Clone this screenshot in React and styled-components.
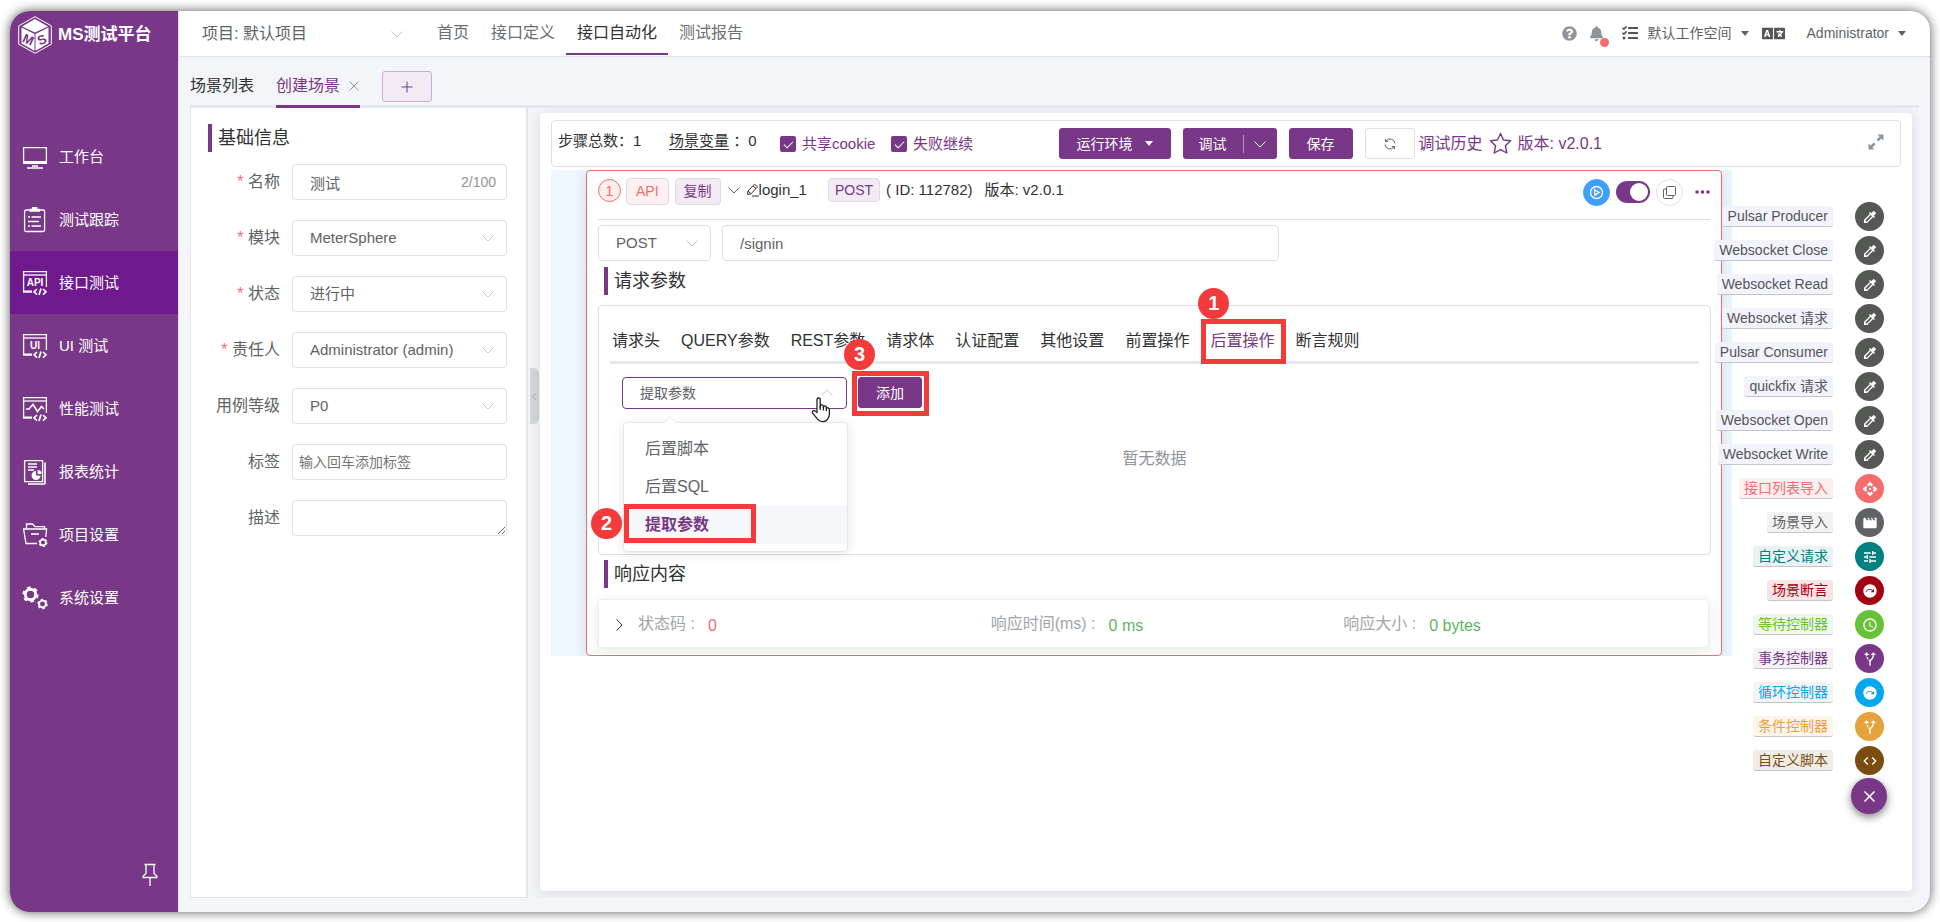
import React from "react";
import styled, { createGlobalStyle, css } from "styled-components";
import { FaBell, FaLanguage, FaQuestionCircle, FaTasks } from "react-icons/fa";
import {
  MdAccessTime,
  MdAltRoute,
  MdApi,
  MdClose,
  MdCode,
  MdColorize,
  MdMovie,
  MdNextPlan,
  MdTune,
} from "react-icons/md";

const purple = "#783887";
const purpleDark = "#6f198d";
const red = "#f56c6c";
const border = "#dcdfe6";
const text = "#606266";

const GlobalStyle = createGlobalStyle`
  * {
    box-sizing: border-box;
  }

  body {
    margin: 0;
    background: #fff;
    color: #303133;
    font-family: "Liberation Sans", "Noto Sans CJK SC", sans-serif;
    font-size: 15px;
    line-height: 20px;
  }

  button, input, select, textarea {
    margin: 0;
    font-family: inherit;
    font-size: inherit;
    line-height: inherit;
    color: inherit;
  }

  button {
    padding: 0;
    border: 0;
    background: none;
    cursor: pointer;
  }

  a {
    color: inherit;
    text-decoration: none;
  }

  h2, ul, dl, dd {
    margin: 0;
    padding: 0;
  }

  svg {
    display: block;
    flex-shrink: 0;
  }
`;

/* ---------- frame and sidebar ---------- */

const Frame = styled.div`
  display: flex;
  min-height: calc(100vh - 21px);
  margin: 11px 10px 10px;
  border-radius: 20px;
  overflow: hidden;
  background: #f4f5f8;
  box-shadow: 0 0 11px rgba(0, 0, 0, 0.65);
`;

const Sidebar = styled.aside`
  display: flex;
  flex-direction: column;
  width: 168px;
  flex-shrink: 0;
  background: ${purple};
  color: #fff;
`;

const Brand = styled.a`
  display: flex;
  align-items: center;
  gap: 6px;
  height: 48px;
  padding-left: 8px;
  font-size: 17px;
  font-weight: bold;
`;

const Menu = styled.nav`
  display: flex;
  flex-direction: column;
  margin-top: 66px;
`;

const MenuItem = styled.a`
  display: flex;
  align-items: center;
  gap: 11px;
  height: 63px;
  padding-left: 12px;
  background: ${props => (props.$active ? purpleDark : "transparent")};
`;

const PinButton = styled.button`
  align-self: flex-end;
  margin: auto 20px 25px 0;
`;

/* ---------- top bar ---------- */

const Main = styled.div`
  display: flex;
  flex-direction: column;
  flex: 1;
  min-width: 0;
  border-left: 1px solid #dfe0e4;
`;

const TopBar = styled.header`
  display: flex;
  height: 46px;
  padding: 0 24px 0 22px;
  background: #fff;
  border-bottom: 1px solid #e2e2e2;
  color: ${text};
  font-size: 14px;
`;

const TopNav = styled.nav`
  display: flex;
  margin-left: 10px;
`;

const TopLink = styled.a`
  height: 44px;
  padding: 12px 11px 0;
  font-size: 16px;
  color: ${props => (props.$active ? "#303133" : "#6b6e73")};
  border-bottom: 2px solid ${props => (props.$active ? purple : "transparent")};
`;

const TopTools = styled.div`
  display: flex;
  align-items: center;
  height: 44px;
  margin-left: auto;
`;

const IconButton = styled.button`
  position: relative;
  margin-right: ${props => props.$space || 0}px;
  color: ${props => props.$color || "#909399"};
`;

const AlertDot = styled.span`
  position: absolute;
  right: -5px;
  bottom: -6px;
  width: 9px;
  height: 9px;
  border-radius: 50%;
  background: ${red};
`;

const TopDropdown = styled.button`
  display: flex;
  align-items: center;
  gap: 9px;
  margin-right: ${props => props.$space || 0}px;
`;

const Caret = styled.span`
  border: 4px solid transparent;
  border-top: 5px solid currentColor;
  border-bottom: 0;
`;

/* ---------- tabs ---------- */

const Content = styled.main`
  display: flex;
  flex-direction: column;
  flex: 1;
  padding: 0 11px 14px;
`;

const PageTabs = styled.div`
  display: flex;
  height: 51px;
  border-bottom: 3px solid #e4e7ed;
  font-size: 16px;
`;

const PageTab = styled.div`
  display: flex;
  align-items: center;
  gap: 8px;
  height: 51px;
  margin-right: 22px;
  padding-top: 9px;
  color: ${props => (props.$active ? purple : "#303133")};
  border-bottom: 3px solid ${props => (props.$active ? purple : "transparent")};
`;

const AddTab = styled.button`
  display: flex;
  align-items: center;
  justify-content: center;
  width: 50px;
  height: 31px;
  margin-top: 14px;
  border: 1px solid #c9afcf;
  border-radius: 3px;
  background: #f2ebf3;
  color: ${purple};
`;

const Workspace = styled.div`
  display: flex;
  flex: 1;
`;

/* ---------- basic info form ---------- */

const InfoPanel = styled.section`
  width: 338px;
  flex-shrink: 0;
  padding: 16px 19px 16px 17px;
  background: #fff;
  border: 1px solid #e4e5e8;
  border-width: 0 2px 1px 1px;
`;

const SectionTitle = styled.h2`
  height: 28px;
  padding-left: 6px;
  border-left: 4px solid ${purple};
  font-size: 18px;
  font-weight: normal;
  line-height: 28px;
`;

const InfoForm = styled.form`
  display: grid;
  grid-template-columns: 72px minmax(0, 1fr);
  gap: 20px 12px;
  align-items: center;
  margin-top: 12px;
  color: ${text};
`;

const Label = styled.label`
  font-size: 16px;
  text-align: right;
  white-space: nowrap;

  ${props =>
    props.$required &&
    css`
      &::before {
        content: "* ";
        color: ${red};
      }
    `}
`;

const Field = styled.div`
  position: relative;
  display: flex;
  align-items: center;
  align-self: center;
  width: ${props => props.$width || "100%"};
  height: 36px;
  border: 1px solid ${props => (props.$plain ? "transparent" : border)};
  border-radius: 4px;
  background: #fff;
  color: ${text};
`;

const Control = styled.input`
  flex: 1;
  min-width: 0;
  height: 100%;
  padding: 0 ${props => props.$padding || "17px"};
  border: 0;
  background: none;
  font-size: ${props => props.$size || "15px"};
  appearance: none;
  outline: none;

  &::placeholder {
    color: #757575;
    opacity: 1;
  }
`;

const Counter = styled.span`
  padding-right: 10px;
  color: #909399;
  font-size: 14px;
`;

const FieldArrow = styled.span`
  position: absolute;
  right: 11px;
  color: #c0c4cc;
  pointer-events: none;
`;

const TextArea = styled.textarea`
  display: block;
  width: 100%;
  height: 36px;
  min-height: 36px;
  padding: 5px 15px;
  border: 1px solid ${border};
  border-radius: 4px;
  resize: vertical;
`;

const DetailArea = styled.section`
  position: relative;
  display: flex;
  flex: 1;
  min-width: 0;
  padding: 5px 7px 7px 12px;
  overflow: hidden;
`;

const CollapseHandle = styled.button`
  position: absolute;
  top: 260px;
  left: 2px;
  display: flex;
  align-items: center;
  justify-content: center;
  width: 9px;
  height: 56px;
  border-radius: 0 6px 6px 0;
  background: #d4d7dd;
  color: #8f959e;
`;

/* ---------- scenario panel ---------- */

const Panel = styled.div`
  position: relative;
  flex: 1;
  min-width: 0;
  padding: 7px 11px;
  border-radius: 4px;
  background: #fff;
  box-shadow: 0 2px 14px rgba(0, 0, 0, 0.12);
`;

const Toolbar = styled.div`
  display: grid;
  grid-template-columns: repeat(24, minmax(0, 1fr));
  align-items: center;
  height: 47px;
  padding: 0 10px 0 6px;
  border: 1px solid ${border};
  border-radius: 4px;
  white-space: nowrap;
`;

const Stat = styled.div`
  grid-column: span 2;
  padding-bottom: 6px;

  a {
    border-bottom: 1px solid #303133;
  }
`;

const CheckLabel = styled.label`
  grid-column: span 2;
  display: flex;
  align-items: center;
  gap: 6px;
  color: ${purple};
`;

const CheckBox = styled.input`
  display: flex;
  justify-content: center;
  width: 16px;
  height: 16px;
  flex-shrink: 0;
  border-radius: 2px;
  background: ${purple};
  appearance: none;

  &::after {
    content: "";
    width: 4px;
    height: 8px;
    margin-top: 3px;
    border: solid #fff;
    border-width: 0 1px 1px 0;
    transform: rotate(45deg);
  }
`;

const Actions = styled.div`
  grid-column: 10 / -1;
  display: flex;
  align-items: center;
  gap: 12px;
  padding: 0 6px 0 1px;
  color: ${purple};
  font-size: 16px;
`;

const Button = styled.button`
  display: flex;
  align-items: center;
  gap: 12px;
  height: 31px;
  padding: 0 17px;
  border: 1px solid ${props => (props.$plain ? border : purple)};
  border-radius: 3px;
  background: ${props => (props.$plain ? "#fff" : purple)};
  color: ${props => (props.$plain ? text : "#fff")};
  font-size: 14px;
`;

const SplitButton = styled.div`
  display: flex;
  align-items: center;
  height: 31px;
  border-radius: 3px;
  background: ${purple};
  color: #fff;
  font-size: 14px;

  button {
    height: 18px;
    padding: 0 16px;
    line-height: 18px;
  }

  button + button {
    padding: 0 10px 0 9px;
    border-left: 1px solid #b793bf;
  }
`;

const VersionGroup = styled.div`
  display: flex;
  align-items: center;
  gap: 6px;
  margin-left: -8px;
`;

const ExpandButton = styled.button`
  margin-left: auto;
  padding-bottom: 4px;
  color: #8b94a3;
`;

const StepArea = styled.div`
  margin: 3px 169px 0 0;
  padding: 0 10px 0 35px;
  overflow: hidden;
  background: #eef6ff;
`;

const StepCard = styled.article`
  padding: 0 10px 7px 11px;
  border: 1px solid ${red};
  border-radius: 4px;
  background: #fff;
  box-shadow: 0 2px 14px rgba(0, 0, 0, 0.12);
`;

const StepHeader = styled.header`
  display: flex;
  align-items: flex-start;
  height: 49px;
  margin-right: 1px;
  padding-top: 7px;
  border-bottom: 1px solid ${border};
  line-height: 24px;
  white-space: nowrap;
`;

const StepIndex = styled.span`
  width: 23px;
  height: 23px;
  margin: 1px 5px 0 0;
  border: 1px solid ${red};
  border-radius: 50%;
  background: #fdeeee;
  color: ${red};
  line-height: 21px;
  text-align: center;
`;

const Tag = styled.span`
  height: ${props => (props.$small ? 24 : 27)}px;
  margin-right: 6px;
  padding: 0 ${props => props.$pad || 8}px;
  border: 1px solid #e4d7e7;
  border-radius: 4px;
  background: ${props => (props.$danger ? "#fef0f0" : "#f2ebf3")};
  color: ${props => (props.$danger ? red : purple)};
  font-size: 14px;
  line-height: ${props => (props.$small ? 22 : 24)}px;
`;

const StepName = styled.span`
  display: flex;
  align-items: center;
  margin: 0 21px 0 5px;
`;

const StepVersion = styled.span`
  margin-left: 12px;
`;

const StepToggle = styled.button`
  display: flex;
  align-items: center;
  height: 24px;
  color: ${text};
`;

const StepTools = styled.div`
  display: flex;
  align-items: center;
  gap: 6px;
  height: 28px;
  margin-left: auto;
`;

const RoundButton = styled.button`
  display: flex;
  align-items: center;
  justify-content: center;
  width: 27px;
  height: 27px;
  border: 1px solid ${props => (props.$primary ? "#409eff" : border)};
  border-radius: 50%;
  background: ${props => (props.$primary ? "#409eff" : "#fff")};
  color: ${props => (props.$primary ? "#fff" : text)};
`;

const Switch = styled.input`
  width: 34px;
  height: 22px;
  padding: 2px;
  border-radius: 11px;
  background: ${purple};
  appearance: none;

  &::after {
    content: "";
    display: block;
    width: 18px;
    height: 18px;
    margin-left: auto;
    border-radius: 50%;
    background: #fff;
  }
`;

const MoreButton = styled.button`
  margin-left: 6px;
  color: ${purple};
`;

const RequestRow = styled.div`
  display: flex;
  gap: 11px;
  margin: 5px 0 6px;
`;

const StepTitle = styled(SectionTitle)`
  margin-left: 6px;
`;

const ParamBox = styled.div`
  height: 250px;
  margin: 10px 0 5px;
  padding: 13px 11px 0;
  border: 1px solid ${border};
  border-radius: 4px;
`;

const ParamTabs = styled.div`
  display: flex;
  gap: 21px;
  height: 45px;
  padding-left: 2px;
  border-bottom: 3px solid #e4e7ed;
  font-size: 16px;
`;

const ParamTab = styled.button`
  position: relative;
  height: 42px;
  padding-top: 2px;
  color: ${props => (props.$active ? purple : "#303133")};
  white-space: nowrap;
`;

const ParamBody = styled.div`
  display: flex;
  align-items: flex-start;
  gap: 11px;
  padding: 13px 0 0 12px;
`;

const ProcessorSelect = styled.div`
  position: relative;
  width: 225px;
`;

const ProcessorButton = styled.button`
  display: flex;
  align-items: center;
  justify-content: space-between;
  width: 100%;
  height: 32px;
  padding: 0 12px 0 17px;
  border: 1px solid ${purple};
  border-radius: 4px;
  color: ${text};
  font-size: 14px;

  svg {
    color: #c0c4cc;
  }
`;

const Options = styled.ul`
  position: absolute;
  top: 45px;
  left: 1px;
  width: 100%;
  padding: 7px 0;
  border: 1px solid #e4e7ed;
  border-radius: 4px;
  background: #fff;
  box-shadow: 0 2px 12px rgba(0, 0, 0, 0.1);
  list-style: none;
  z-index: 2;

  &::before {
    content: "";
    position: absolute;
    top: -5px;
    left: 41px;
    width: 9px;
    height: 9px;
    border: solid #ebeef5;
    border-width: 1px 0 0 1px;
    background: #fff;
    transform: rotate(45deg);
  }
`;

const Option = styled.li`
  position: relative;
  height: 38px;
  padding: 0 21px;
  background: ${props => (props.$selected ? "#f5f7fa" : "transparent")};
  color: ${props => (props.$selected ? purple : text)};
  font-size: 16px;
  font-weight: ${props => (props.$selected ? "bold" : "normal")};
  line-height: 38px;
`;

const AddWrap = styled.div`
  position: relative;
`;

const Pointer = styled.svg`
  position: absolute;
  top: 20px;
  left: 189px;
  z-index: 3;
`;

/* numbered red frame around the control that a step talks about */
const Mark = styled.span`
  position: absolute;
  inset: ${props => props.$inset};
  border: 5px solid #f33b3b;
  pointer-events: none;
  z-index: 3;
`;

const MarkNumber = styled.span`
  position: absolute;
  top: ${props => props.$top}px;
  left: ${props => props.$left}px;
  width: 31px;
  height: 31px;
  border-radius: 50%;
  background: #f33b3b;
  color: #fff;
  font-size: 20px;
  font-weight: bold;
  line-height: 31px;
  text-align: center;
`;

const Empty = styled.p`
  margin: 0;
  padding-top: 40px;
  color: #909399;
  font-size: 16px;
  text-align: center;
`;

const Response = styled.div`
  display: flex;
  align-items: center;
  height: 49px;
  margin: 11px 2px 0 0;
  padding: 2px 12px 0 13px;
  border: 1px solid #ebeef5;
  border-radius: 4px;
  box-shadow: 0 2px 12px rgba(0, 0, 0, 0.1);
  font-size: 16px;
`;

const Metrics = styled.dl`
  display: grid;
  grid-template-columns: repeat(3, 1fr);
  flex: 1;
  margin-left: 12px;

  div {
    display: flex;
    gap: 13px;
  }

  dt {
    color: #a3a5a8;
  }
`;

const MetricValue = styled.dd`
  padding-top: 2px;
  color: ${props => props.$color};
`;

/* ---------- floating step menu ---------- */

const FabMenu = styled.div`
  position: absolute;
  right: 25px;
  bottom: 77px;
  display: flex;
  flex-direction: column;
  align-items: flex-end;
  gap: 5px;
  z-index: 4;
`;

const FabItem = styled.button`
  display: flex;
  align-items: center;
  gap: 22px;
  margin-right: 3px;
`;

const FabLabel = styled.span`
  padding: 0 5px;
  border-bottom: 1px solid #c4c4c8;
  border-radius: 3px;
  background: ${props => props.$bg};
  color: ${props => props.$color};
  font-size: 14px;
`;

const FabCircle = styled.span`
  display: flex;
  align-items: center;
  justify-content: center;
  width: 29px;
  height: 29px;
  border-radius: 50%;
  background: ${props => props.$color};
  color: #fff;
`;

const FabMain = styled.button`
  display: flex;
  align-items: center;
  justify-content: center;
  width: 36px;
  height: 36px;
  margin-top: -2px;
  border-radius: 50%;
  background: ${purple};
  color: #fff;
  box-shadow: 0 3px 8px rgba(0, 0, 0, 0.5);
`;

/* ---------- drawings ---------- */

const Chevron = ({ size = 14, turn = 0 }) => (
  <svg width={size} height={size} viewBox="0 0 14 14" fill="none" stroke="currentColor">
    <path d="M1.5 4.5 L7 10 L12.5 4.5" transform={`rotate(${turn} 7 7)`} />
  </svg>
);

const Logo = () => (
  <svg width="34" height="38" viewBox="0 0 34 38">
    <path d="M17 0.7 L33.3 9.8 V28.2 L17 37.3 L0.7 28.2 V9.8 Z" fill="none" stroke="#fff" />
    <path d="M17 3 L30 10.4 L17 16.6 L4 10.4 Z" fill="#fff" />
    <path d="M3.5 11.6 L16.5 18 V34.8 L3.5 27.4 Z" fill="#fff" />
    <path d="M30.5 11.6 L17.5 18 V34.8 L30.5 27.4 Z" fill="#fff" />
    <g fill={purple} fontSize="13" fontWeight="bold" textAnchor="middle">
      <text x="10" y="28" transform="rotate(24 10 24)">M</text>
      <text x="24" y="28" transform="rotate(-24 24 24)">S</text>
    </g>
  </svg>
);

const MenuIcon = ({ children }) => (
  <svg width="26" height="26" viewBox="0 0 26 26" fill="none" stroke="#fff" strokeWidth="1.3">
    {children}
  </svg>
);

const CodeWindow = ({ children }) => (
  <MenuIcon>
    <path d="M1.6 22 V1.6 H24.4 V17" />
    <path d="M1.6 5 H24.4" />
    <path d="M1 21.6 H10" strokeWidth="2.2" />
    <path d="M15 19 L12 21.8 L15 24.6 M21 19 L24 21.8 L21 24.6 M19 18.6 L17 25" strokeWidth="1.7" />
    {children}
  </MenuIcon>
);

const WindowText = ({ children }) => (
  <text x="13" y="16" fill="#fff" stroke="none" fontSize="10" fontWeight="bold" textAnchor="middle">
    {children}
  </text>
);

const Gear = ({ x, y, r }) => (
  <g>
    <circle cx={x} cy={y} r={r} strokeWidth={r * 0.55} />
    <circle
      cx={x}
      cy={y}
      r={r * 1.35}
      strokeWidth={r * 0.4}
      strokeDasharray={`${r * 0.71} ${r * 0.703}`}
    />
  </g>
);

const menu = [
  {
    name: "工作台",
    icon: (
      <MenuIcon>
        <path d="M1.6 18 V3.6 H24.4 V18" />
        <path d="M1 18.5 H25" strokeWidth="3" />
        <path d="M10 22 H16 M5 24 H21" strokeWidth="1.5" />
      </MenuIcon>
    ),
  },
  {
    name: "测试跟踪",
    icon: (
      <MenuIcon>
        <rect x="2.6" y="3" width="20" height="21.5" rx="1.5" />
        <path d="M7.5 3.3 H18 M10 1.6 H15.5" strokeWidth="3" />
        <path d="M6 10 H8 M9.5 10 H19 M6 14.5 H17 M6 19 H8 M9.5 19 H19" />
      </MenuIcon>
    ),
  },
  {
    name: "接口测试",
    active: true,
    icon: (
      <CodeWindow>
        <WindowText>API</WindowText>
      </CodeWindow>
    ),
  },
  {
    name: "UI 测试",
    icon: (
      <CodeWindow>
        <WindowText>UI</WindowText>
      </CodeWindow>
    ),
  },
  {
    name: "性能测试",
    icon: (
      <CodeWindow>
        <path d="M4 13 H7 L11 8.5 L15.5 15.5 L19.5 10.5 L22 13" strokeWidth="1.7" />
      </CodeWindow>
    ),
  },
  {
    name: "报表统计",
    icon: (
      <MenuIcon>
        <path d="M2.6 1.6 H20.6 V22.6 H2.6 Z" />
        <path d="M23 3.5 V25 M6 25 H23" strokeWidth="1.6" />
        <path d="M6 5 H15 M6 8 H15 M6 11 H12" strokeWidth="1.5" />
        <path d="M14 12 A4.5 4.5 0 1 0 18.6 16.6 H14 Z" fill="#fff" stroke="none" />
        <path d="M15.6 11 A4 4 0 0 1 19.6 15 H15.6 Z" fill="#fff" stroke="none" />
      </MenuIcon>
    ),
  },
  {
    name: "项目设置",
    icon: (
      <MenuIcon>
        <path d="M4.5 6.5 V2 H10.5 L13 4.6 H22.5 V6.5" />
        <path d="M15 21.5 H4 L1.6 7 H24.6 L23.8 15" />
        <path d="M9 12 H17" strokeWidth="1.6" />
        <Gear x={21} y={20.5} r={2.9} />
      </MenuIcon>
    ),
  },
  {
    name: "系统设置",
    icon: (
      <MenuIcon>
        <Gear x={8.5} y={9.5} r={5.2} />
        <Gear x={20.5} y={19} r={3.4} />
      </MenuIcon>
    ),
  },
];

const topLinks = ["首页", "接口定义", "接口自动化", "测试报告"];

const paramTabs = [
  "请求头",
  "QUERY参数",
  "REST参数",
  "请求体",
  "认证配置",
  "其他设置",
  "前置操作",
  "后置操作",
  "断言规则",
];

const plugin = { icon: MdColorize, color: "#555855", text: "#555", bg: "#f3f3fe" };

const fabs = [
  { ...plugin, name: "Pulsar Producer" },
  { ...plugin, name: "Websocket Close" },
  { ...plugin, name: "Websocket Read" },
  { ...plugin, name: "Websocket 请求" },
  { ...plugin, name: "Pulsar Consumer" },
  { ...plugin, name: "quickfix 请求" },
  { ...plugin, name: "Websocket Open" },
  { ...plugin, name: "Websocket Write" },
  { name: "接口列表导入", icon: MdApi, color: "#f56c6c", bg: "#fbeff0" },
  { name: "场景导入", icon: MdMovie, color: "#606266", bg: "#f2f2f3" },
  { name: "自定义请求", icon: MdTune, color: "#008080", bg: "#e8f3f3" },
  { name: "场景断言", icon: MdNextPlan, color: "#a30014", bg: "#f6e4e7" },
  { name: "等待控制器", icon: MdAccessTime, color: "#67c23a", bg: "#f0f8ec" },
  { name: "事务控制器", icon: MdAltRoute, color: purple, bg: "#f4f2f5" },
  { name: "循环控制器", icon: MdNextPlan, color: "#02a7f0", bg: "#f2f4f5" },
  { name: "条件控制器", icon: MdAltRoute, color: "#e6a23c", bg: "#fdf5ec" },
  { name: "自定义脚本", icon: MdCode, color: "#7b4d12", bg: "#f0ece8" },
];

/* ---------- page parts ---------- */

const SelectField = ({ id, label, value, width, plain, padding, size }) => (
  <Field $width={width} $plain={plain}>
    <Control as="select" id={id} aria-label={label} $padding={padding} $size={size}>
      <option>{value}</option>
    </Control>
    <FieldArrow>
      <Chevron />
    </FieldArrow>
  </Field>
);

const SideMenu = () => (
  <Sidebar>
    <Brand href="#">
      <Logo />
      MS测试平台
    </Brand>
    <Menu>
      {menu.map(item => (
        <MenuItem key={item.name} href="#" $active={item.active}>
          {item.icon}
          {item.name}
        </MenuItem>
      ))}
    </Menu>
    <PinButton aria-label="固定菜单">
      <svg width="16" height="24" viewBox="0 0 16 24" fill="none" stroke="#fff" strokeWidth="1.3">
        <path d="M2.5 1.5 H13.5 M4 1.5 V10.5 L1.2 13 V14.5 H14.8 V13 L12 10.5 V1.5 M8 14.5 V23" />
      </svg>
    </PinButton>
  </Sidebar>
);

const Header = () => (
  <TopBar>
    <SelectField
      label="项目"
      value="项目: 默认项目"
      width="215px"
      plain
      padding="0"
      size="16px"
    />
    <TopNav>
      {topLinks.map(name => (
        <TopLink key={name} href="#" $active={name === "接口自动化"}>
          {name}
        </TopLink>
      ))}
    </TopNav>
    <TopTools>
      <IconButton $space={12} aria-label="帮助">
        <FaQuestionCircle size={15} />
      </IconButton>
      <IconButton $space={18} aria-label="通知">
        <FaBell size={15} />
        <AlertDot />
      </IconButton>
      <IconButton $space={10} $color="#555" aria-label="任务">
        <FaTasks size={16} />
      </IconButton>
      <TopDropdown $space={13}>
        默认工作空间
        <Caret />
      </TopDropdown>
      <IconButton $space={22} $color="#555" aria-label="语言">
        <FaLanguage size={23} />
      </IconButton>
      <TopDropdown>
        Administrator
        <Caret />
      </TopDropdown>
    </TopTools>
  </TopBar>
);

const BasicInfo = () => (
  <InfoPanel>
    <SectionTitle>基础信息</SectionTitle>
    <InfoForm>
      <Label htmlFor="name" $required>名称</Label>
      <Field>
        <Control id="name" defaultValue="测试" />
        <Counter>2/100</Counter>
      </Field>
      <Label htmlFor="module" $required>模块</Label>
      <SelectField id="module" value="MeterSphere" />
      <Label htmlFor="status" $required>状态</Label>
      <SelectField id="status" value="进行中" />
      <Label htmlFor="owner" $required>责任人</Label>
      <SelectField id="owner" value="Administrator (admin)" />
      <Label htmlFor="level">用例等级</Label>
      <SelectField id="level" value="P0" />
      <Label htmlFor="tags">标签</Label>
      <Field>
        <Control id="tags" placeholder="输入回车添加标签" $padding="6px" $size="14px" />
      </Field>
      <Label htmlFor="desc">描述</Label>
      <TextArea id="desc" />
    </InfoForm>
  </InfoPanel>
);

const ScenarioToolbar = () => (
  <Toolbar>
    <Stat>步骤总数：1</Stat>
    <Stat>
      <a href="#">场景变量</a> ：0
    </Stat>
    <CheckLabel>
      <CheckBox type="checkbox" defaultChecked />
      共享cookie
    </CheckLabel>
    <CheckLabel>
      <CheckBox type="checkbox" defaultChecked />
      失败继续
    </CheckLabel>
    <Actions>
      <Button>
        运行环境
        <Caret />
      </Button>
      <SplitButton>
        <button>调试</button>
        <button aria-label="更多调试">
          <Chevron />
        </button>
      </SplitButton>
      <Button>保存</Button>
      <Button $plain aria-label="刷新">
        <svg width="14" height="14" viewBox="0 0 14 14" fill="none" stroke="currentColor">
          <path d="M3 4 A5 5 0 0 1 12 6.5 M11 10 A5 5 0 0 1 2 7.5" />
          <path d="M2.5 1.8 V4.5 H5.2 M11.5 12.2 V9.5 H8.8" />
        </svg>
      </Button>
      <VersionGroup>
        <a href="#">调试历史</a>
        <IconButton $color={purple} aria-label="关注">
          <svg width="23" height="23" viewBox="0 0 23 23" fill="none" stroke="currentColor" strokeWidth="1.4" strokeLinejoin="round">
            <path d="M11.5 1.5 L14.5 8 L21.6 8.8 L16.4 13.7 L17.8 21 L11.5 17.6 L5.2 21 L6.6 13.7 L1.4 8.8 L8.5 8 Z" />
          </svg>
        </IconButton>
        <span>版本: v2.0.1</span>
      </VersionGroup>
      <ExpandButton aria-label="全屏">
        <svg width="16" height="16" viewBox="0 0 16 16" fill="currentColor">
          <path d="M9.5 0.5 H15.5 V6.5 L13.4 4.4 L10.2 7.4 L8.6 5.8 L11.6 2.6 Z" />
          <path d="M6.5 15.5 H0.5 V9.5 L2.6 11.6 L5.8 8.6 L7.4 10.2 L4.4 13.4 Z" />
        </svg>
      </ExpandButton>
    </Actions>
  </Toolbar>
);

const StepHead = () => (
  <StepHeader>
    <StepIndex>1</StepIndex>
    <Tag $danger $pad={9}>API</Tag>
    <Tag>复制</Tag>
    <StepToggle aria-label="收起步骤">
      <Chevron />
    </StepToggle>
    <StepName>
      <svg width="13" height="14" viewBox="0 0 13 14" fill="none" stroke="#303133">
        <path d="M1.5 11.5 L2 8 L8.5 1.2 L11.5 3.8 L5 10.8 Z M7 3 L10 5.6 M2 8 L5 10.8 M6 13 H13" />
      </svg>
      login_1
    </StepName>
    <Tag $small $pad={6}>POST</Tag>
    <span>( ID: 112782)</span>
    <StepVersion>版本: v2.0.1</StepVersion>
    <StepTools>
      <RoundButton $primary aria-label="运行">
        <svg width="15" height="15" viewBox="0 0 15 15" fill="none" stroke="currentColor" strokeWidth="1.3">
          <circle cx="7.5" cy="7.5" r="6" />
          <path d="M5.8 4.8 V10.2 L10 7.5 Z" />
        </svg>
      </RoundButton>
      <Switch type="checkbox" role="switch" defaultChecked aria-label="启用" />
      <RoundButton aria-label="复制步骤">
        <svg width="13" height="13" viewBox="0 0 13 13" fill="none" stroke="currentColor">
          <rect x="3.5" y="0.5" width="9" height="9" rx="1" />
          <path d="M3 3 H1.5 Q0.5 3 0.5 4 V11.5 Q0.5 12.5 1.5 12.5 H9 Q10 12.5 10 11.5 V10" />
        </svg>
      </RoundButton>
      <MoreButton aria-label="更多">
        <svg width="15" height="4" viewBox="0 0 15 4" fill="currentColor">
          <circle cx="2" cy="2" r="1.8" />
          <circle cx="7.5" cy="2" r="1.8" />
          <circle cx="13" cy="2" r="1.8" />
        </svg>
      </MoreButton>
    </StepTools>
  </StepHeader>
);

const PostProcessors = () => (
  <ParamBody>
    <ProcessorSelect>
      <ProcessorButton aria-haspopup="listbox" aria-expanded="true">
        提取参数
        <Chevron turn={180} />
      </ProcessorButton>
      <Pointer width="20" height="26" viewBox="0 0 20 26" fill="#fff" stroke="#222" strokeWidth="1.3" strokeLinejoin="round">
        <path d="M6 15.5 V3 Q6 1 7.6 1 Q9.2 1 9.2 3 V10 V8.8 Q9.6 7.6 11 7.8 Q12.4 8 12.4 9.4 V10.6 Q12.6 8.8 14 9 Q15.4 9.2 15.4 10.8 V12 Q15.8 10.4 17.2 10.8 Q18.4 11.2 18.4 12.8 V17 Q18.4 20 16.8 21.6 Q15.6 24.6 12 24.6 Q8.4 24.6 6.8 22.4 L1.6 16.2 Q0.8 14.6 2.2 13.8 Q3.4 13.2 4.6 14.4 Z" />
        <path d="M9.2 9 V13 M12.4 10 V13.4 M15.4 11.4 V14" />
      </Pointer>
      <Options role="listbox">
        <Option role="option">后置脚本</Option>
        <Option role="option">后置SQL</Option>
        <Option role="option" aria-selected="true" $selected>
          提取参数
          <Mark $inset="-2px 91px 1px 0">
            <MarkNumber $top={-1} $left={-38}>2</MarkNumber>
          </Mark>
        </Option>
      </Options>
    </ProcessorSelect>
    <AddWrap>
      <Button>添加</Button>
      <Mark $inset="-6px -7px -8px -6px">
        <MarkNumber $top={-37} $left={-13}>3</MarkNumber>
      </Mark>
    </AddWrap>
  </ParamBody>
);

const Step = () => (
  <StepCard>
    <StepHead />
    <RequestRow>
      <SelectField label="请求方法" value="POST" width="113px" />
      <Field $width="50%">
        <Control aria-label="请求路径" defaultValue="/signin" />
      </Field>
    </RequestRow>
    <StepTitle>请求参数</StepTitle>
    <ParamBox>
      <ParamTabs>
        {paramTabs.map(name => (
          <ParamTab key={name} $active={name === "后置操作"}>
            {name}
            {name === "后置操作" && (
              <Mark $inset="0 -12px -3px -9px">
                <MarkNumber $top={-36} $left={-8}>1</MarkNumber>
              </Mark>
            )}
          </ParamTab>
        ))}
      </ParamTabs>
      <PostProcessors />
      <Empty>暂无数据</Empty>
    </ParamBox>
    <StepTitle>响应内容</StepTitle>
    <Response>
      <Chevron turn={-90} />
      <Metrics>
        <div>
          <dt>状态码 :</dt>
          <MetricValue $color={red}>0</MetricValue>
        </div>
        <div>
          <dt>响应时间(ms) :</dt>
          <MetricValue $color="#5cb85c">0 ms</MetricValue>
        </div>
        <div>
          <dt>响应大小 :</dt>
          <MetricValue $color="#5cb85c">0 bytes</MetricValue>
        </div>
      </Metrics>
    </Response>
  </StepCard>
);

const AddStepMenu = () => (
  <FabMenu>
    {fabs.map(fab => {
      const Icon = fab.icon;
      return (
        <FabItem key={fab.name}>
          <FabLabel $bg={fab.bg} $color={fab.text || fab.color}>
            {fab.name}
          </FabLabel>
          <FabCircle $color={fab.color}>
            <Icon size={16} />
          </FabCircle>
        </FabItem>
      );
    })}
    <FabMain aria-label="关闭">
      <MdClose size={19} />
    </FabMain>
  </FabMenu>
);

const App = () => (
  <>
    <GlobalStyle />
    <Frame>
      <SideMenu />
      <Main>
        <Header />
        <Content>
          <PageTabs>
            <PageTab>
              <a href="#">场景列表</a>
            </PageTab>
            <PageTab $active>
              <a href="#">创建场景</a>
              <IconButton aria-label="关闭标签">
                <svg width="12" height="12" viewBox="0 0 12 12" stroke="currentColor">
                  <path d="M1.5 1.5 L10.5 10.5 M10.5 1.5 L1.5 10.5" />
                </svg>
              </IconButton>
            </PageTab>
            <AddTab aria-label="新建标签">
              <svg width="12" height="12" viewBox="0 0 12 12" stroke="currentColor">
                <path d="M0.5 6 H11.5 M6 0.5 V11.5" />
              </svg>
            </AddTab>
          </PageTabs>
          <Workspace>
            <BasicInfo />
            <DetailArea>
              <CollapseHandle aria-label="收起基础信息">
                <Chevron size={9} turn={90} />
              </CollapseHandle>
              <Panel>
                <ScenarioToolbar />
                <StepArea>
                  <Step />
                </StepArea>
                <AddStepMenu />
              </Panel>
            </DetailArea>
          </Workspace>
        </Content>
      </Main>
    </Frame>
  </>
);

export default App;
